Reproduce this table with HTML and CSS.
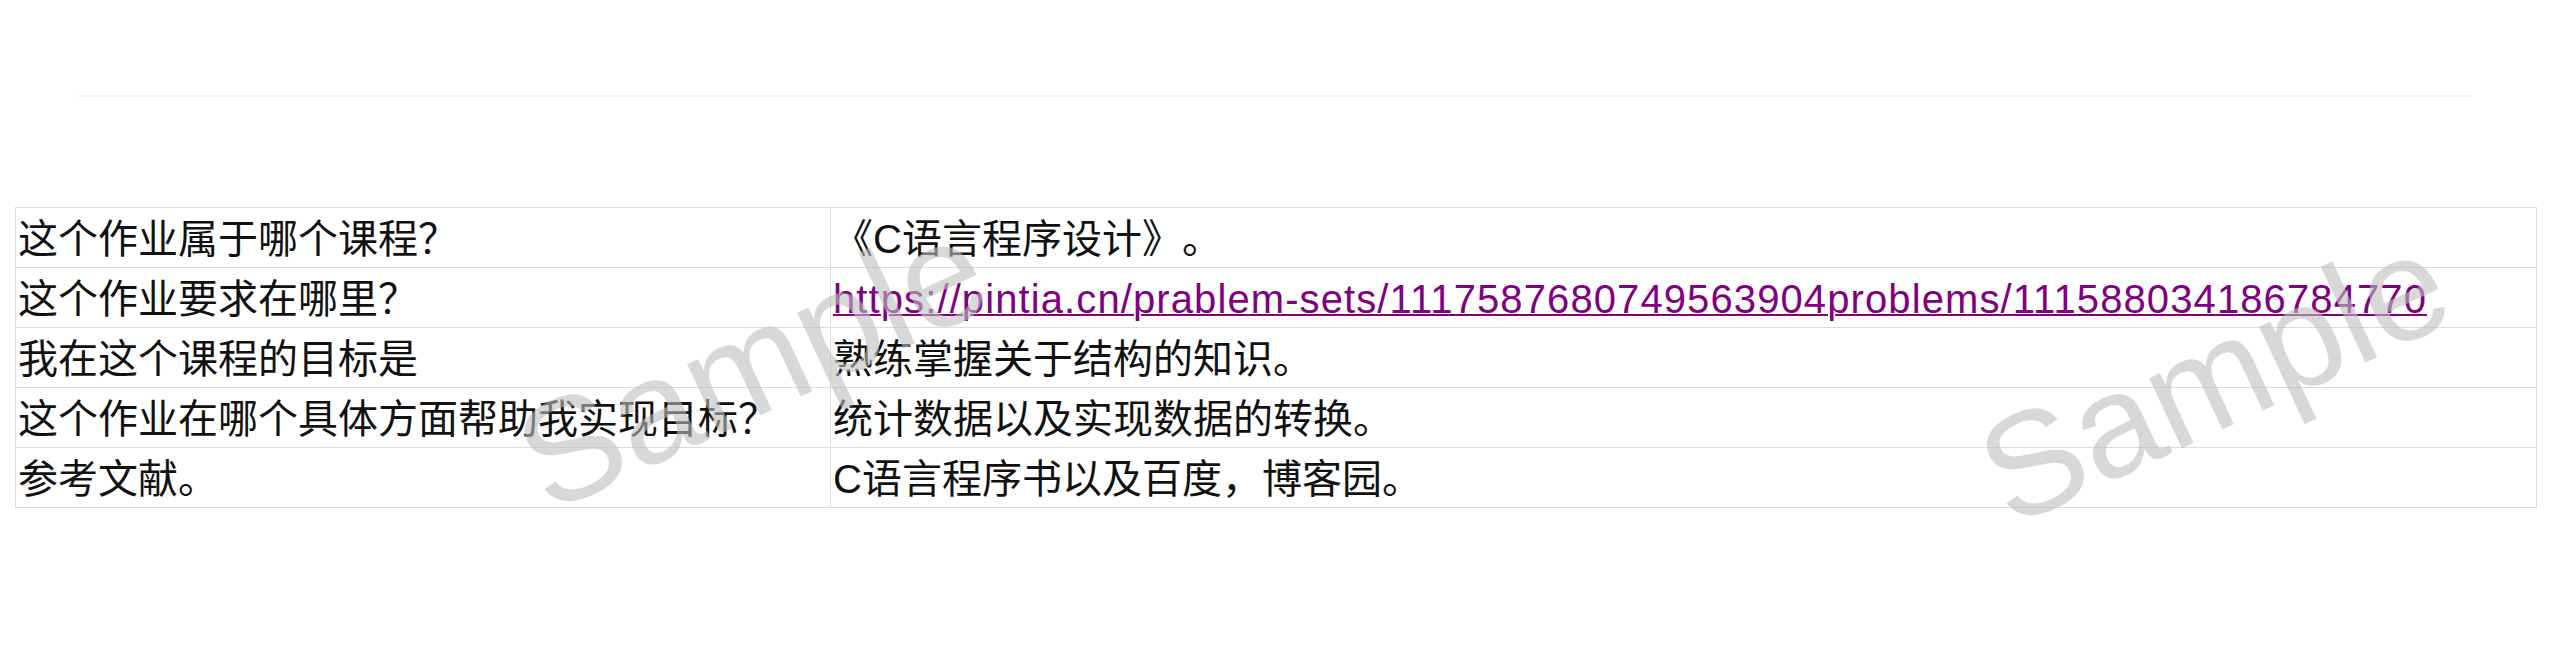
FILE: index.html
```html
<!DOCTYPE html>
<html lang="zh-CN">
<head>
<meta charset="utf-8">
<title>作业信息</title>
<link rel="stylesheet" href="styles.css">
</head>
<body>
<div class="page">
  <hr class="sep">
  <table class="info">
    <colgroup><col class="c1"><col class="c2"></colgroup>
    <tbody>
      <tr><td>这个作业属于哪个课程？</td><td>《C语言程序设计》。</td></tr>
      <tr><td>这个作业要求在哪里？</td><td><a class="link" href="#">https://pintia.cn/prablem-sets/1117587680749563904problems/111588034186784770</a></td></tr>
      <tr><td>我在这个课程的目标是</td><td>熟练掌握关于结构的知识。</td></tr>
      <tr><td>这个作业在哪个具体方面帮助我实现目标？</td><td>统计数据以及实现数据的转换。</td></tr>
      <tr><td>参考文献。</td><td>C语言程序书以及百度，博客园。</td></tr>
    </tbody>
  </table>
  <div class="wm wm-left">Sample</div>
  <div class="wm wm-right">Sample</div>
</div>
</body>
</html>
```

FILE: styles.css
```css
html, body {
  margin: 0;
  padding: 0;
  background: #ffffff;
}

.page {
  position: relative;
  width: 2552px;
  height: 656px;
  overflow: hidden;
  font-family: "Liberation Sans", "Noto Sans CJK SC", sans-serif;
  color: #111111;
}

.sep {
  display: block;
  margin: 95px 81px 0 78px;
  height: 2px;
  border: none;
  background: #f1f1f1;
}

.info {
  margin: 110px 0 0 15px;
  width: 2522px;
  border-collapse: collapse;
  table-layout: fixed;
  border: 1px solid #dcdcdc;
  font-size: 40px;
  text-spacing-trim: space-all;
}

.c1 { width: 815px; }

.info td {
  height: 59px;
  padding: 3px 2px 0 2px;
  border: 1px solid #dcdcdc;
  vertical-align: middle;
  line-height: 56px;
  white-space: nowrap;
  box-sizing: border-box;
}

.link {
  color: #800080;
  text-decoration: underline;
  text-decoration-thickness: 2px;
  letter-spacing: 1.1px;
}

.wm {
  position: absolute;
  font-family: "Liberation Sans", sans-serif;
  font-size: 146px;
  line-height: 1;
  color: rgba(190, 190, 190, 0.6);
  transform: translate(-50%, -50%) rotate(-25deg);
  white-space: nowrap;
  pointer-events: none;
}

.wm-left { left: 752px; top: 364px; }
.wm-right { left: 2214px; top: 378px; }
```
